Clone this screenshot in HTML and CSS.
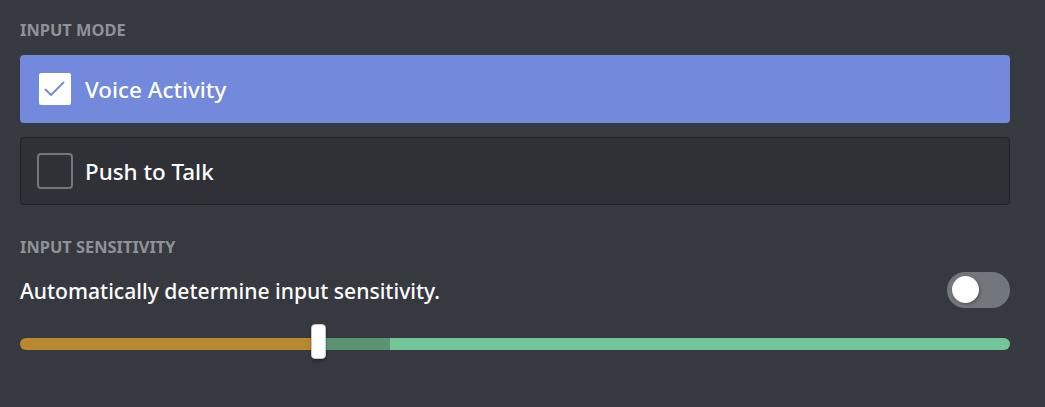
FILE: index.html
```html
<!DOCTYPE html>
<html>
<head>
<meta charset="utf-8">
<link rel="stylesheet" href="styles.css">
</head>
<body>
<div class="page">
  <div class="section-title">Input Mode</div>
  <div class="options">
    <div class="option option-selected">
      <span class="checkbox checkbox-checked">
        <svg width="24" height="24" viewBox="0 0 24 24"><path d="M2.5 12.5 L8 18 L20.5 5.5" fill="none" stroke="#7289da" stroke-width="1.8" stroke-linecap="round" stroke-linejoin="round"/></svg>
      </span>
      <span class="option-label">Voice Activity</span>
    </div>
    <div class="option option-idle">
      <span class="checkbox"></span>
      <span class="option-label">Push to Talk</span>
    </div>
  </div>
  <div class="section-title section-title-2">Input Sensitivity</div>
  <div class="auto-row">
    <span class="auto-label">Automatically determine input sensitivity.</span>
    <span class="toggle"><span class="toggle-knob"></span></span>
  </div>
  <div class="slider">
    <div class="track">
      <div class="seg seg-orange" style="width:298px"></div>
      <div class="seg seg-dark" style="width:72px"></div>
      <div class="seg seg-light"></div>
    </div>
    <div class="grabber" style="left:291px"></div>
  </div>
</div>
</body>
</html>
```
FILE: styles.css
```css
html, body {
  margin: 0;
  padding: 0;
  background: #36393f;
  width: 1045px;
  height: 407px;
  overflow: hidden;
}
.page {
  padding: 20px 35px 0 20px;
  font-family: "Noto Sans", "Open Sans", sans-serif;
}
.section-title {
  height: 20px;
  line-height: 20px;
  font-size: 16.4px;
  font-weight: 700;
  text-transform: uppercase;
  color: #8e9297;
  letter-spacing: 0;
}
.options {
  margin-top: 15px;
  display: flex;
  flex-direction: column;
  gap: 14px;
}
.option {
  height: 68px;
  box-sizing: border-box;
  border-radius: 4px;
  display: flex;
  align-items: center;
  padding-left: 17px;
  gap: 12px;
}
.option-selected {
  background: #7389db;
}
.option-idle {
  background: #2f3136;
  border: 1px solid #202225;
  padding-left: 16px;
}
.checkbox {
  width: 36px;
  height: 36px;
  box-sizing: border-box;
  border: 2px solid #72767d;
  border-radius: 4px;
  display: flex;
  align-items: center;
  justify-content: center;
}
.checkbox-checked {
  border-color: #7389db;
  background: #fff;
}
.option-label {
  font-size: 22.4px;
  font-weight: 500;
  color: #fff;
}
.section-title-2 {
  margin-top: 32px;
}
.auto-row {
  margin-top: 15px;
  height: 36px;
  display: flex;
  align-items: center;
  justify-content: space-between;
}
.auto-label {
  font-size: 21.1px;
  font-weight: 500;
  color: #fff;
}
.toggle {
  width: 63px;
  height: 36px;
  border-radius: 18px;
  background: #72767d;
  position: relative;
}
.toggle-knob {
  position: absolute;
  left: 5px;
  top: 4px;
  width: 27px;
  height: 27px;
  border-radius: 50%;
  background: #fff;
  box-shadow: 1px 1px 3px rgba(0,0,0,0.35);
}
.slider {
  position: relative;
  margin-top: 16px;
  height: 36px;
}
.track {
  position: absolute;
  left: 0;
  right: 0;
  top: 14px;
  height: 12px;
  border-radius: 6px;
  overflow: hidden;
  display: flex;
}
.seg { height: 100%; }
.seg-orange { background: #b98930; }
.seg-dark { background: #5a9473; }
.seg-light { background: #74c597; flex: 1; }
.grabber {
  position: absolute;
  top: 0;
  width: 15px;
  height: 35px;
  box-sizing: border-box;
  background: #fff;
  border: 1px solid #c7c8cb;
  border-radius: 4px;
  box-shadow: 0 2px 3px rgba(0,0,0,0.3);
}
```
